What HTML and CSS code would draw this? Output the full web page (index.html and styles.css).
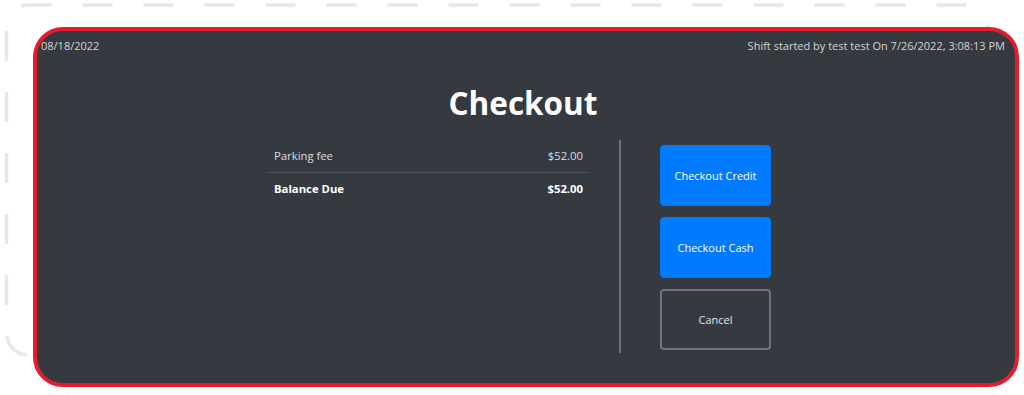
FILE: index.html
```html
<!DOCTYPE html>
<html lang="en">
<head>
    <meta charset="UTF-8">
    <meta name="viewport" content="width=device-width, initial-scale=1.0">
    <title>Checkout</title>
    <link rel="stylesheet" href="styles.css">
</head>
<body>

<div class="frame">
    <!-- garis putus-putus di belakang kartu -->
    <svg class="frame-dashes" width="1024" height="395" viewBox="0 0 1024 395">
        <rect x="6.5" y="5" width="981" height="350" rx="22" ry="22"
              fill="none" stroke="#e5e8ec" stroke-width="3.5"
              stroke-dasharray="30 31" stroke-dashoffset="7"/>
    </svg>

    <div class="checkout-card">
        <div class="top-bar">
            <span class="date">08/18/2022</span>
            <span class="shift">Shift started by test test On 7/26/2022, 3:08:13 PM</span>
        </div>

        <h1 class="title">Checkout</h1>

        <div class="content">
            <table class="summary">
                <tr>
                    <td>Parking fee</td>
                    <td class="amount">$52.00</td>
                </tr>
                <tr class="total">
                    <td>Balance Due</td>
                    <td class="amount">$52.00</td>
                </tr>
            </table>

            <div class="divider"></div>

            <div class="actions">
                <button class="btn btn-primary">Checkout Credit</button>
                <button class="btn btn-primary">Checkout Cash</button>
                <button class="btn btn-outline">Cancel</button>
            </div>
        </div>
    </div>
</div>

</body>
</html>
```

FILE: styles.css
```css
* {
    margin: 0;
    padding: 0;
    box-sizing: border-box;
}

body {
    font-family: "Open Sans", "Noto Sans", sans-serif;
    background-color: #ffffff;
    width: 1024px;
    height: 395px;
    overflow: hidden;
}

.frame {
    position: relative;
    padding: 27px 5px 0 33px;
}

.frame-dashes {
    position: absolute;
    left: 0;
    top: 0;
    z-index: 0;
}

.checkout-card {
    position: relative;
    z-index: 1;
    width: 986px;
    height: 360px;
    background-color: #343a40;
    border: 4px solid #e31d2e;
    border-radius: 30px;
    color: #dee2e6;
}

/* Baris atas: tanggal dan info shift */
.top-bar {
    display: flex;
    justify-content: space-between;
    padding: 8px 10px 0 4px;
    font-size: 11px;
    line-height: 14px;
    color: #d2d5d8;
}

.title {
    margin-top: 32px;
    text-align: center;
    font-size: 31.5px;
    line-height: 36px;
    font-weight: 700;
    color: #ffffff;
    padding-right: 6px;
}

.content {
    display: flex;
    margin-top: 19px;
    margin-left: 230px;
}

/* Tabel ringkasan biaya */
.summary {
    width: 323px;
    height: 64px;
    border-collapse: collapse;
    font-size: 11.3px;
    color: #dadde0;
}

.summary td {
    height: 32px;
    padding: 0 7px;
}

.summary tr + tr td {
    border-top: 1px solid #4b5158;
}

.summary .amount {
    text-align: right;
}

.summary .total td {
    font-weight: 700;
    color: #ffffff;
}

.divider {
    width: 2px;
    height: 213px;
    margin-left: 29px;
    background-color: #6c737a;
}

.actions {
    display: flex;
    flex-direction: column;
    gap: 11px;
    margin-top: 5px;
    margin-left: 39px;
}

.btn {
    width: 111px;
    height: 61px;
    font-family: "Open Sans", "Noto Sans", sans-serif;
    font-size: 11px;
    border-radius: 4px;
    cursor: pointer;
}

.btn-primary {
    background-color: #007bff;
    border: 1px solid #007bff;
    color: #ffffff;
}

.btn-outline {
    background-color: transparent;
    border: 2px solid #6c757d;
    color: #e4e6e8;
}
```
